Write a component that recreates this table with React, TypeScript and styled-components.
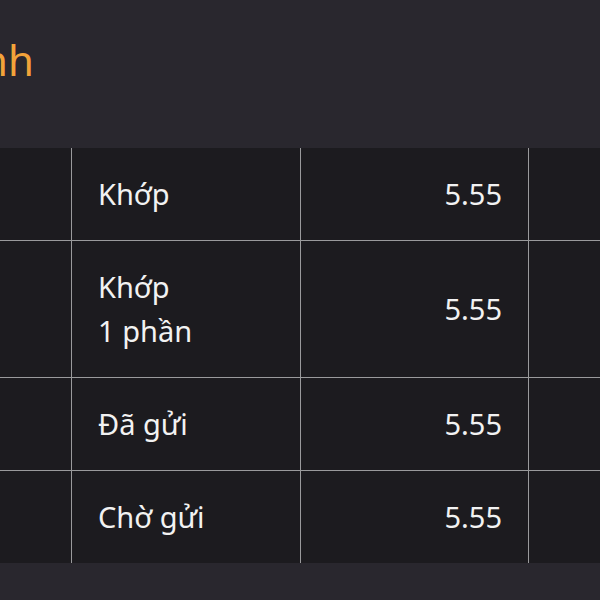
import React from "react";
import styled, { createGlobalStyle } from "styled-components";

const Global = createGlobalStyle`
  html, body { margin: 0; padding: 0; background: #29272e; overflow: hidden; }
  body { font-family: "Noto Sans", "Open Sans", sans-serif; }
`;

const Page = styled.div`
  width: 600px;
  height: 600px;
  display: flex;
  flex-direction: column;
  background: #29272e;
  overflow: hidden;
`;

const Header = styled.header`
  height: 148px;
  box-sizing: border-box;
  padding-top: 31px;
  display: flex;
  justify-content: flex-end;
  width: 34px;
`;

const Title = styled.h1`
  margin: 0;
  font-size: 42px;
  line-height: 58px;
  font-weight: 400;
  color: #f3a33a;
  white-space: nowrap;
`;

const Table = styled.div`
  display: grid;
  grid-template-columns: 72px 229px 228px 1fr;
  background: #1c1b1f;
  color: #f2f2f2;
`;

const Cell = styled.div<{ $last?: boolean; $lastRow?: boolean; $align?: "left" | "right" }>`
  box-sizing: border-box;
  padding: 24px 26px 24px 26px;
  font-size: 29px;
  line-height: 44px;
  text-align: ${(p) => p.$align ?? "left"};
  border-right: ${(p) => (p.$last ? "none" : "1px solid #9a9a9c")};
  border-bottom: ${(p) => (p.$lastRow ? "none" : "1px solid #9a9a9c")};
  display: flex;
  align-items: center;
  justify-content: ${(p) => (p.$align === "right" ? "flex-end" : "flex-start")};
`;

const Status = styled.span`
  display: block;
`;

const Footer = styled.div`
  flex: 1;
  background: #29272e;
`;

const rows = [
  { status: ["Khớp"], price: "5.55" },
  { status: ["Khớp", "1 phần"], price: "5.55" },
  { status: ["Đã gửi"], price: "5.55" },
  { status: ["Chờ gửi"], price: "5.55" },
];

export default function App() {
  return (
    <Page>
      <Global />
      <Header>
        <Title>Lệnh</Title>
      </Header>
      <Table>
        {rows.map((r, i) => {
          const lastRow = i === rows.length - 1;
          return (
            <React.Fragment key={i}>
              <Cell $lastRow={lastRow} />
              <Cell $lastRow={lastRow}>
                <div>
                  {r.status.map((s) => (
                    <Status key={s}>{s}</Status>
                  ))}
                </div>
              </Cell>
              <Cell $lastRow={lastRow} $align="right">
                {r.price}
              </Cell>
              <Cell $lastRow={lastRow} $last />
            </React.Fragment>
          );
        })}
      </Table>
      <Footer />
    </Page>
  );
}
